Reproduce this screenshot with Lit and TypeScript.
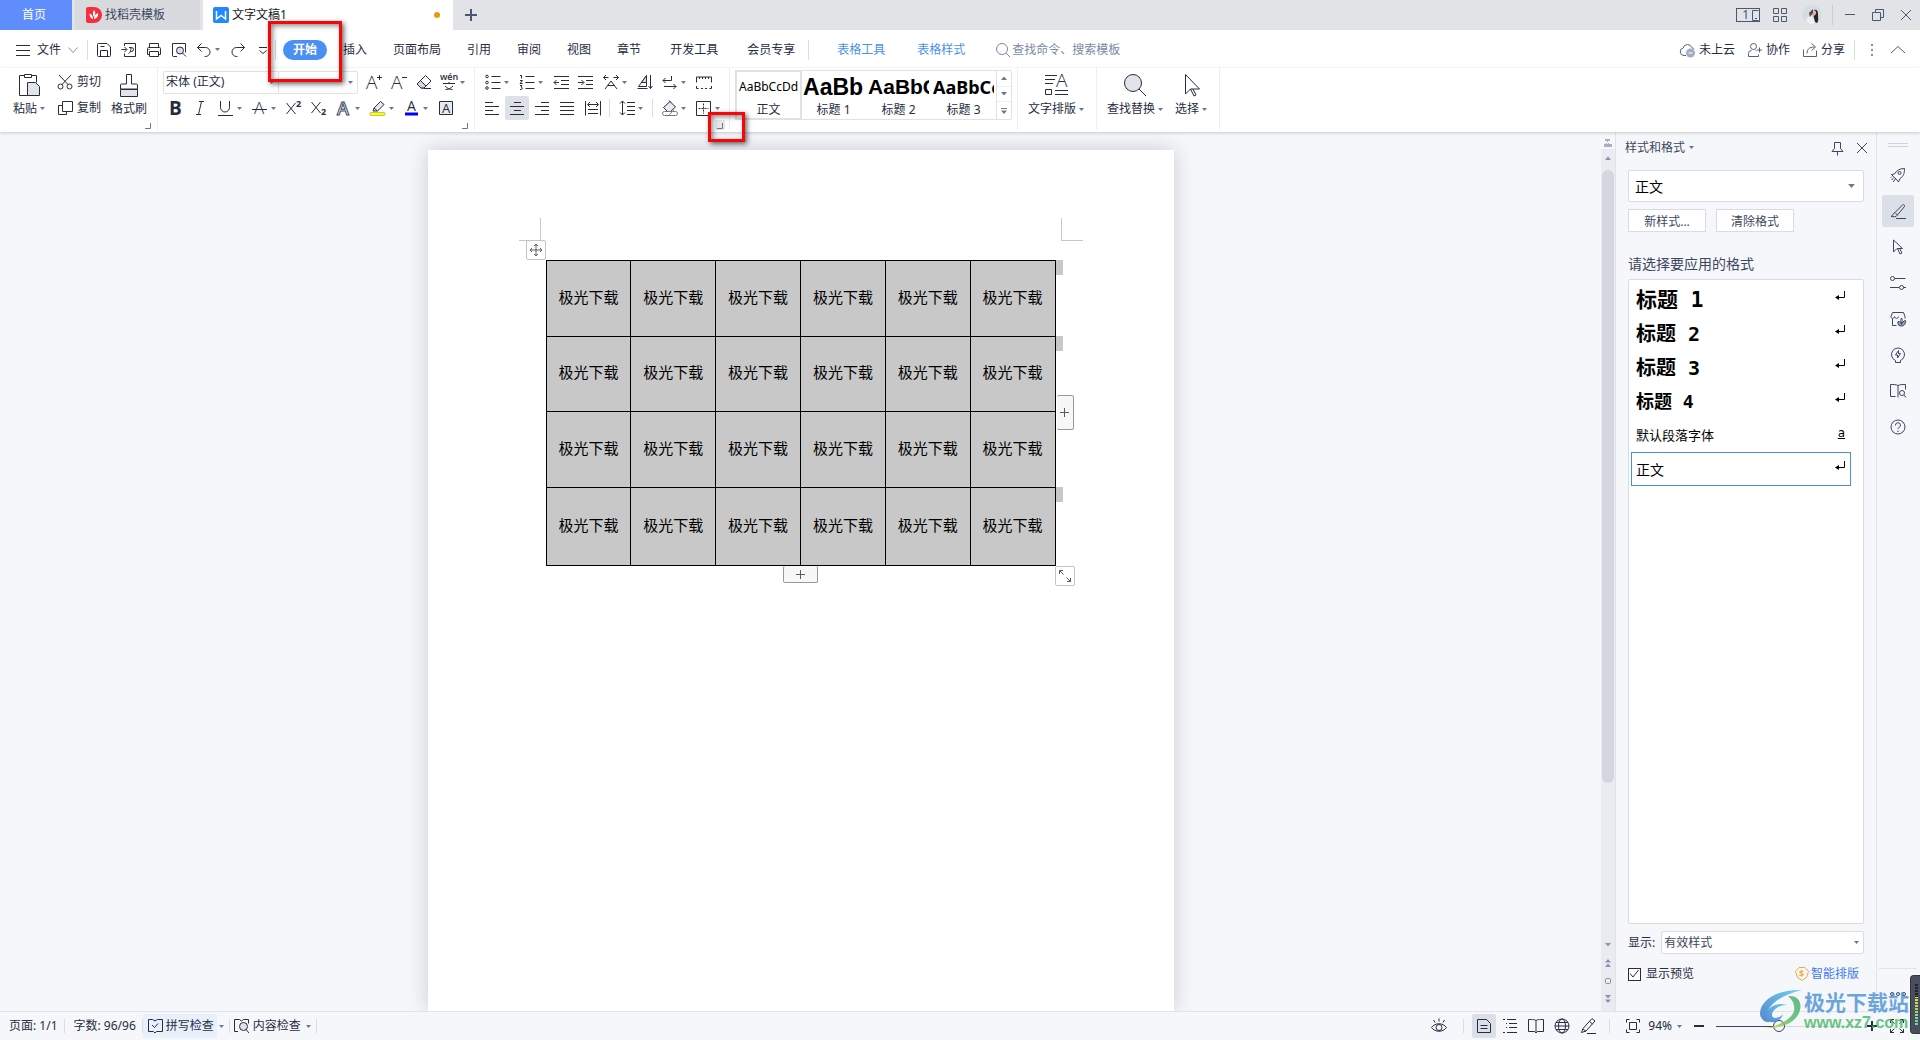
import { LitElement, html, svg, css, nothing, TemplateResult } from "lit";
import { customElement, state } from "lit/decorators.js";
import { classMap } from "lit/directives/class-map.js";

/* Line icons, drawn on a 16-unit grid unless a size is given. */
type Glyph = { w?: number; h?: number; d: TemplateResult };
const G: Record<string, Glyph> = {
  menu: { d: svg`<path d="M1 3.500h14M1 8.500h14M1 13.500h14"/>` },
  chevDown: { w: 12, h: 12, d: svg`<path d="M1.500 3.500l4.500 5 4.500-5" stroke="#8a90a0"/>` },
  chevUp: { d: svg`<path d="M1 11l7-6.500 7 6.500"/>` },
  save: { d: svg`<path d="M2.500 1.500h8.500l3.500 3.500v8.500a1 1 0 0 1-1 1h-11a1 1 0 0 1-1-1v-11a1 1 0 0 1 1-1zM4.500 14.500v-6h7v6M4.500 4.500h4"/>` },
  export: { d: svg`<path d="M3.500 4v-2.500h11v13h-11v-3M0.500 7.500h5M3.500 5l2.500 2.500-2.500 2.500M7.500 11.500c2-1 2.500-3 2.500-6M8 5.500h2.500a2 2 0 0 1 0 4h-1.500"/>` },
  print: { d: svg`<path d="M3.500 5.500v-4h9v4M3.500 12.500h-2v-6a1 1 0 0 1 1-1h11a1 1 0 0 1 1 1v6h-2M3.500 9.500h9v5h-9zM2.500 7.500h1"/>` },
  preview: { d: svg`<path d="M6 14.500h-3.500a1 1 0 0 1-1-1v-12h13v9"/><circle cx="9" cy="8.500" r="3.500" fill="#dcdfe6"/><path d="M11.500 11l3.500 3.500"/>` },
  undo: { d: svg`<path d="M5.500 1.500l-4 4 4 4M1.500 5.500h8a4.500 4.500 0 0 1 0 9h-1"/>` },
  redo: { d: svg`<path d="M10.500 1.500l4 4-4 4M14.500 5.500h-8a4.500 4.500 0 0 0 0 9h1"/>` },
  more: { d: svg`<path d="M4 5.500h8M4.500 8.500l3.500 3 3.500-3"/>` },
  search: { d: svg`<circle cx="7" cy="7" r="5.500"/><path d="M11 11l4 4"/>` },
  cloud: { w: 17, h: 16, d: svg`<path d="M7 13.500h-2a3.800 3.800 0 0 1-.8-7.500a4.500 4.500 0 0 1 8.600-.5a3.500 3.500 0 0 1 2.200 2"/><circle cx="11.500" cy="11" r="4.500" fill="#a3adc2" stroke="none"/><path d="M9.500 11h4" stroke="#fff"/>` },
  collab: { d: svg`<circle cx="6.500" cy="4.500" r="3"/><path d="M4.500 8.500a3 3 0 0 0-3 3v3h10v-2M8.500 8.500l1 .5M12.500 5.500v5M10 8h5"/>` },
  share: { d: svg`<path d="M1.500 7.500v7h13v-6M5 11.500c0-4 2-6.500 7.500-6.500M9.500 1.500l4 3.500-4 3.500"/>` },
  dots: { d: svg`<path d="M7 2h2v2h-2zM7 7h2v2h-2zM7 12h2v2h-2z" fill="currentColor" stroke="none" opacity=".7"/>` },
  plus: { d: svg`<path d="M8 2v12M2 8h12" stroke-width="2"/>` },
  phone: { w: 8, h: 12, d: svg`<path d="M7.500 1.500h-6v10h6M4 9.500h2"/>` },
  grid: { d: svg`<path d="M1.500 1.500h5v5h-5zM9.500 1.500h5v5h-5zM1.500 9.500h5v5h-5zM9.500 9.500h5v5h-5z"/>` },
  min: { d: svg`<path d="M3 7.500h10"/>` },
  restore: { d: svg`<path d="M2.500 5.500h8v8h-8zM5.500 5.500v-3h8v8h-3"/>` },
  close: { d: svg`<path d="M3 3l10 10M13 3l-10 10"/>` },
  avatar: { w: 20, h: 20, d: svg`<g stroke="none"><circle cx="10" cy="10" r="10" fill="#d3dde3"/><path d="M12 5c3-1 4 1 4 4 0 4 1 7-1 9l-2-1-2-8z" fill="#2b2226"/><path d="M10 6c2-2 5 0 4 3l-2 2-2-1z" fill="#e0b2a8"/><path d="M5 13l5-3 3 8-4 2-5-3z" fill="#eaf0f4"/><path d="M7 8l4-4 0 4-3 4z" fill="#5a494c"/></g>` },
  docer: { w: 16, h: 16, d: svg`<g stroke="none"><path d="M8 0a8 8 0 0 1 0 16H2a2 2 0 0 1-2-2V2a2 2 0 0 1 2-2z" fill="#f2303e"/><path d="M8 3c2 2 1.500 5-.2 7C6.500 8 6.500 5 8 3zM3.500 6.500c2 .5 3.500 2.500 3.500 5.500-2.500-.5-3.500-2.500-3.500-5.500zM12 6c.5 3-1 5.500-4 6 0-3 1.500-5 4-6z" fill="#fff"/></g>` },
  writer: { w: 16, h: 16, d: svg`<rect width="16" height="16" rx="2" fill="#2089fb" stroke="none"/><path d="M3.500 4v8l4.500-3.500 4.500 3.500v-8" stroke="#fff" stroke-width="1.500"/>` },

  paste: { w: 24, h: 24, d: svg`<path d="M7 2.500h-4.500v20h8M15 2.500h4.500v7M7.500 1.500h7v3h-7z"/><path d="M10.500 9.500h8l4 4v9h-12z" fill="#e1e4e9"/>` },
  cut: { d: svg`<path d="M2 1l9.500 10M14 1l-9.500 10"/><circle cx="3.500" cy="12.500" r="2.500"/><circle cx="12.500" cy="12.500" r="2.500"/>` },
  copy: { d: svg`<path d="M5.500 1.500h10v10h-10zM5.500 5.500h-4v9h8v-3"/>` },
  brush: { w: 24, h: 24, d: svg`<path d="M9.500 11v-9.500h5v9.500h5a1 1 0 0 1 1 1v4h-17v-4a1 1 0 0 1 1-1z"/><path d="M3.500 16.500h17v7h-17z" fill="#e1e4e9"/>` },
  aPlus: { d: svg`<text x="0" y="15" class="t19">A</text><path d="M11 3.500h5M13.500 1v5"/>` },
  aMinus: { d: svg`<text x="0" y="15" class="t19">A</text><path d="M11 3.500h5"/>` },
  eraser: { d: svg`<path d="M9.500 1.500l5.500 5.500-7 7h-3l-4-4z"/><path d="M1 10l3.500-3.500 5.500 5.500-2 2h-3z" fill="#d4d7de"/><path d="M8 14.500h7"/>` },
  pinyin: { d: svg`<text x="-1" y="6" class="t9">wén</text><path d="M2 9.500h12M8 8v2M4 12c2 2 4 3.500 7.500 3.500M12 12c-2 2-4 3.500-7.500 3.500"/>` },
  bold: { d: svg`<text x="1" y="15" class="bold">B</text>` },
  italic: { d: svg`<path d="M6 1.500h5M3 14.500h5M8.500 1.500l-3 13"/>` },
  underline: { d: svg`<path d="M2.500 1v6.500a4.500 4.500 0 0 0 9 0v-6.500M0 15.500h15"/>` },
  strike: { d: svg`<text x="2" y="14" class="t17">A</text><path d="M0 9.500h15"/>` },
  sup: { d: svg`<path d="M.5 3l9 11M9.500 3l-9 11"/><text x="10" y="7" class="t9b">2</text>` },
  sub: { d: svg`<path d="M.5 2l9 11M9.500 2l-9 11"/><text x="10" y="15" class="t9b">2</text>` },
  outline: { d: svg`<text x="1" y="15" class="out">A</text>` },
  highlight: { w: 16, d: svg`<path d="M4 8l6.500-6.500 3.500 3-6.500 6.500zM4 8l-1 3h4.500" fill="#e8eaee"/><rect x="0" y="12.500" width="15" height="3" rx="1" fill="#ffff00" stroke="#8a8a40" stroke-width=".5"/>` },
  fontColor: { d: svg`<text x="3" y="11" class="t14">A</text><path d="M1 14h13" stroke="#0000ff" stroke-width="3"/>` },
  boxA: { d: svg`<path d="M1.500 1.500h13v13h-13z" fill="#e8eaee"/><text x="4" y="13" class="t13">A</text>` },
  bullets: { d: svg`<circle cx="2" cy="2.500" r="1.300"/><circle cx="2" cy="8.500" r="1.300"/><circle cx="2" cy="14" r="1.300"/><path d="M6.500 2.500h9M6.500 8.500h9M6.500 14.500h9"/>` },
  numbers: { d: svg`<path d="M6.500 2.500h9M6.500 8.500h9M6.500 14.500h9M1 1.500h1.500v3M1 6.500h2.500l-2.500 3h2.500M1 11.500h2l-1 1.500 1.500 1-1 1.500h-1.500"/>` },
  outdent: { d: svg`<path d="M1 2.500h15M8 6.500h8M8 10.500h8M1 14.500h15M1 8.500h5M3.500 6l-2.500 2.500 2.500 2.500"/>` },
  indent: { d: svg`<path d="M0 2.500h15M8 6.500h7M8 10.500h7M0 14.500h15M0 8.500h5.500M3.500 6l2.500 2.500-2.500 2.500"/>` },
  charWidth: { d: svg`<path d="M.5 3.500h5M3 1l-2.500 2.500 2.500 2.500M15.500 3.500h-5M13 1l2.500 2.500-2.500 2.500M2 15l6-8 6 8M4.500 11.500h7"/>` },
  sort: { d: svg`<path d="M9.500 1.500v11h-8zM5.500 8.500h4"/><path d="M9.500 1.500v7h-5z" fill="#d9dce2"/><path d="M.5 14.500h10M13.500 1v13.500M11.500 12l2 2.500 2-2.500"/>` },
  marks: { d: svg`<path d="M9.500 2v4.500h-8.500M3.500 4l-2.500 2.500 2.500 2.500M2 12.500h12M11.500 10l2.500 2.500-2.500 2.500"/>` },
  ruler: { d: svg`<path d="M.5 8.500v-5.500h15v5.500M3.500 3v2M6.500 3v2M9.500 3v2M12.500 3v2M.5 12v2.500h2M15.500 12v2.500h-2M5 14.500h2M9 14.500h2"/>` },
  left: { d: svg`<path d="M0 2.500h8M0 6.500h14M0 10.500h8M0 14.500h14"/>` },
  center: { d: svg`<path d="M4 2.500h7M0 6.500h14M4 10.500h7M0 14.500h14"/>` },
  right: { d: svg`<path d="M6 2.500h8M0 6.500h14M6 10.500h8M0 14.500h14"/>` },
  justify: { d: svg`<path d="M0 2.500h14M0 6.500h14M0 10.500h14M0 14.500h14"/>` },
  distribute: { d: svg`<path d="M.5 1v14.500M15.500 1v14.500M3 4.500h10M5 2l-2.500 2.500 2.500 2.500M11 2l2.500 2.500-2.500 2.500M3 9.500h10M3 13.500h10"/>` },
  spacing: { d: svg`<path d="M3.500 1v14M1 3.500l2.500-2.500 2.500 2.500M1 12.500l2.500 2.500 2.500-2.500M8 2.500h8M8 6.500h8M8 10.500h8M8 14.500h8"/>` },
  shading: { d: svg`<path d="M8 1.500l5.500 5.500-5 4.500h-3l-4-4z" fill="#e8eaee"/><path d="M7 .5l2 2"/><rect x=".5" y="11.500" width="15" height="4" rx="2" fill="#fff" stroke="#777"/><path d="M7 15l5-5" stroke="#e66"/>` },
  borders: { d: svg`<path d="M.5 1.500h14v14h-14z"/><path d="M7.500 3.500v10M2.500 8.500h10" stroke-dasharray="2 1"/>` },
  typeset: { w: 24, h: 24, d: svg`<path d="M1 2.500h12M1 6.500h10M1 10.500h8M1.500 16.500h6v5h-6zM11 17.500h13M11 21.500h13"/><text x="12" y="14" class="t19">A</text>` },
  find: { w: 24, h: 24, d: svg`<circle cx="10" cy="10" r="8.500" fill="#e1e4e9"/><path d="M16 16l7 7"/>` },
  pointer: { w: 24, h: 24, d: svg`<path d="M6.500 1.500v19.500l5-5h9zM11.500 16l3.500 7 2-1-3-6"/>` },

  pin: { d: svg`<path d="M5.500 2.500h6v6l2.500 3h-11l2.500-3zM8.500 11.500v4"/>` },
  ret: { w: 10, h: 10, d: svg`<path d="M9.500 0v6.500h-7" stroke="#000"/><path d="M0 6.500l4-2.500v5z" fill="#000" stroke="none"/>` },
  coin: { d: svg`<path d="M5 1.500h6l3.500 4-2 6-4.500 3-4.500-3-2-6z" stroke="#efad3c"/><text x="5" y="11" class="coin">$</text>` },
  rocket: { d: svg`<path d="M14.500 1.500c-5 0-8 2-10 5.500l-3 .5 2 2 3.500 3.500 1.500 2 1.500-3.500c3.500-2 4.500-5 4.500-10z"/><circle cx="9.500" cy="6" r="1.500"/><path d="M4 10.500l-2.500 2.500M5.500 12l-2.500 3M1 10.500l1-1"/>` },
  pen: { d: svg`<path d="M5 9.500l8-8c1 0 2 1 1.500 2l-7 8.500c-1 2-4 2-6.500 1.500 2-.5 1.500-3 4-4zM5 9.500l2.500 2.500M6 15.500h10"/>` },
  cursor: { d: svg`<path d="M3.500 1v12l3.500-3.500h5.500zM7.500 9.500l2.500 5.500 2-1-2.500-4.500"/>` },
  sliders: { d: svg`<circle cx="2.500" cy="3.500" r="2"/><path d="M4.500 3.500h11M0 12.500h9M13.500 12.500h2.500"/><circle cx="11.500" cy="12.500" r="2"/>` },
  shop: { d: svg`<path d="M1 5.500l1.500-4h11l1.500 4M1 5.500c0 2.500 3 2.500 3.500 0 .5 2.500 3.500 2.500 4 0M2.500 7.500v7h4M15 5.500v2"/><path d="M9 14.500a4 4 0 0 1-1-4c2 0 3 1 3.500 3 .5-2 2-3.500 4-4 .5 3-1 5.500-4.500 5.500z" fill="#9aa2b3"/><path d="M11.500 7c-1 1.500-1 3 0 5 1-2 1-3.500 0-5z"/>` },
  bulb: { d: svg`<path d="M5.500 13.500a6.500 6.500 0 1 1 5 0v2h-5z"/><path d="M8.500 3.500l-3 4.500h2v3l3-4.500h-2z"/>` },
  book: { d: svg`<path d="M8 14.500v-12c-2-1-4-1-7.500-1v12h5M8 2.500c2-1 4-1 7.500-1v5"/><circle cx="12" cy="10" r="2.500"/><path d="M14 12l2 2.500"/>` },
  help: { d: svg`<circle cx="8" cy="8" r="7"/><path d="M5.500 6.500a2.500 2.500 0 1 1 3.500 2c-1 .5-1 1-1 1.500M8 11.500v1.500"/>` },
  three: { d: svg`<circle cx="2" cy="8" r="1.500"/><circle cx="8" cy="8" r="1.500"/><circle cx="14" cy="8" r="1.500"/>` },

  spell: { d: svg`<path d="M5.500 1.500h-4v12h5l1.500 1.500 1.500-1.500h6v-12h-5l-2.500 1.500z"/><path d="M5 7l2.500 2.500 3.500-4"/>` },
  inspect: { d: svg`<path d="M4 13.500h-3.500v-12h5l2 1.500 2-1.500h5v4"/><circle cx="9.500" cy="8.500" r="4" fill="#dfe3ea"/><path d="M12 11.500l3 3.500"/>` },
  eye: { d: svg`<path d="M.5 9.500c3.500-5 11.500-5 15 0-3.500 5-11.500 5-15 0zM8 .5v3M2.500 2l1.500 2.500M13.500 2l-1.500 2.500"/><circle cx="8" cy="9.500" r="3"/>` },
  docView: { d: svg`<path d="M1.500 1.500h9l4 4v9h-13zM4.500 7.500h7M4.500 10.500h7"/>` },
  outlineView: { d: svg`<path d="M1 1.500h2M5 1.500h9M4 5.500h1M7 5.500h8M4 9.500h1M7 9.500h8M1 14.500h2M5 14.500h10"/>` },
  readView: { d: svg`<path d="M8 14.500v-12c-1.500-1-3-1-7.500-1v12h6l1.500 1.500 1.500-1.500h6v-12c-4.500 0-6 0-7.500 1"/>` },
  web: { d: svg`<circle cx="8" cy="8" r="7"/><ellipse cx="8" cy="8" rx="3.500" ry="7"/><path d="M1 8h14M2 4.500h12M2 11.500h12"/>` },
  write: { d: svg`<path d="M12 .5l3 2.500-9 10-4.500 1.500 1.500-4zM9.500 3.500l3 2.500M3 11l3 2.500M7 15.500h9"/>` },
  fit: { d: svg`<path d="M1.500 4.500v-3h3M11.500 1.500h3v3M14.500 11.500v3h-3M4.500 14.500h-3v-3M4.500 4.500h7v7h-7z"/>` },
  expand: { d: svg`<path d="M1.500 5v-3.500h3.500M11 1.500h3.500v3.500M14.500 11v3.500h-3.500M5 14.500h-3.500v-3.500M1.500 1.500l4 4M14.500 1.500l-4 4M14.500 14.500l-4-4M1.500 14.500l4-4"/>` },
  minus2: { d: svg`<path d="M3 8h10" stroke-width="2"/>` },
  plus2: { d: svg`<path d="M3 8h10M8 3v10" stroke-width="2"/>` },

  move: { w: 14, h: 14, d: svg`<path d="M7 1v12M1 7h12M5 3l2-2 2 2M5 11l2 2 2-2M3 5l-2 2 2 2M11 5l2 2-2 2"/>` },
  thinPlus: { w: 9, h: 9, d: svg`<path d="M4.500 0v9M0 4.500h9"/>` },
  resize: { w: 14, h: 14, d: svg`<path d="M1.500 5v-3.500h3.500M1.500 1.500l4 4M12.500 9v3.500h-3.500M12.500 12.500l-4-4"/>` },
  launch: { w: 6, h: 6, d: svg`<path d="M5.500 0v5.500h-5.500"/>` },
  tick: { w: 12, h: 12, d: svg`<path d="M2 5.500l3 3.500 5.500-7"/>` },
  sbTop: { w: 8, h: 8, d: svg`<path d="M1 0h5v2h-2v1h-1v-1h-2zM0 5h2v-1h1v1h1v-1h1v1h3v3h-8z" fill="currentColor" stroke="none"/>` },
  sbUp: { w: 6, h: 4, d: svg`<path d="M0 4l3-3.500 3 3.500z" fill="currentColor" stroke="none"/>` },
  sbDown: { w: 6, h: 4, d: svg`<path d="M0 0h6l-3 3.500z" fill="currentColor" stroke="none"/>` },
  sbUp2: { w: 6, h: 8, d: svg`<path d="M0 3.500l3-3.500 3 3.500zM0 8l3-3.500 3 3.500z" fill="currentColor" stroke="none"/>` },
  sbDown2: { w: 6, h: 8, d: svg`<path d="M0 0h6l-3 3.500zM0 4.500h6l-3 3.500z" fill="currentColor" stroke="none"/>` },
  sbBox: { w: 6, h: 6, d: svg`<rect x=".5" y=".5" width="5" height="5" rx="1"/>` },
  sbMore: { w: 6, h: 6, d: svg`<path d="M0 .5h6"/><path d="M0 2.500h6l-3 3.500z" fill="currentColor" stroke="none"/>` },
  brand: { w: 44, h: 42, d: svg`<defs><linearGradient id="wb" x1="0" y1="1" x2="1" y2="0"><stop offset="0" stop-color="#2f6fc4"/><stop offset="1" stop-color="#4cc4f2"/></linearGradient><linearGradient id="wg" x1="0" y1="1" x2="1" y2="0"><stop offset="0" stop-color="#e6d83c"/><stop offset=".5" stop-color="#4fb96a"/><stop offset="1" stop-color="#3cae6c"/></linearGradient></defs><g stroke="none"><path d="M43 1C22 0 2 9 1 24c0 6 5 10 10 9-8-7-1-24 32-32z" fill="url(#wb)"/><path d="M28 16c-12-4-23 5-21 13 3 7 15 5 17-4-4 5-11 5-11 1 0-5 7-10 15-10z" fill="url(#wb)"/><path d="M29 7c10-1 14 6 12 14C38 33 24 40 5 39c14-2 27-8 30-17 1-6-1-11-6-15z" fill="url(#wg)"/></g>` },
};

const icon = (name: string) => {
  const g = G[name], w = g.w ?? 16, h = g.h ?? 16;
  return html`<svg class="ic" width=${w} height=${h} viewBox="0 0 ${w} ${h}" aria-hidden="true">${g.d}</svg>`;
};
const caret = html`<svg class="caret" width="5" height="3" viewBox="0 0 5 3" aria-hidden="true"><path d="M0 0h5l-2.500 3z"/></svg>`;

/* One toolbar button; "v" marks a drop-down, "|" a divider. */
type Tool = [name: string, label: string, kind?: "v" | "on"] | "|";

const MENUS = ["插入", "页面布局", "引用", "审阅", "视图", "章节"];
const SIDE: [string, string][] = [
  ["rocket", "快捷"], ["pen", "样式和格式"], ["cursor", "选择"], ["sliders", "属性"],
  ["shop", "资源"], ["bulb", "灵感"], ["book", "查阅"], ["help", "帮助"],
];
const STYLES: [string, string, string][] = [
  ["标题 1", "h1", "ret"], ["标题 2", "h2", "ret"], ["标题 3", "h2", "ret"],
  ["标题 4", "h4", "ret"], ["默认段落字体", "def", "a"], ["正文", "body", "ret"],
];

@customElement("app-root")
export class AppRoot extends LitElement {
  @state() private current = "正文";
  @state() private zoom = 94;

  static styles = css`
    :host { display: block; }
    * { box-sizing: border-box; }
    .app {
      position: relative; min-height: 100vh; display: flex; flex-direction: column; overflow: hidden;
      font: 12px/16px "Noto Sans", "Noto Sans CJK SC", sans-serif; color: #262d3f; background: #f5f7fa;
    }
    button, select, input { font: inherit; color: inherit; margin: 0; }
    button { border: 0; padding: 0; background: none; display: flex; align-items: center; white-space: nowrap; flex: none; }
    select { appearance: none; border: 0; background: none; outline: 0; border-radius: 0; min-width: 0; }
    a { color: inherit; text-decoration: none; }
    .ic { flex: none; display: block; fill: none; stroke: currentColor; stroke-width: 1; overflow: visible; }
    .ic text { stroke: none; fill: currentColor; font-family: "Open Sans", sans-serif; }
    .ic .t19 { font-size: 19px; font-weight: 300; }
    .ic .t17 { font-size: 17px; font-weight: 300; }
    .ic .t14 { font-size: 14px; }
    .ic .t13 { font-size: 13px; }
    .ic .t9 { font-size: 9px; font-weight: 600; }
    .ic .t9b { font-size: 9px; font-weight: 700; }
    .ic .bold { font-size: 19px; font-weight: 700; }
    .ic .out { font-size: 18px; font-weight: 600; fill: #fff; stroke: #3a4560; }
    .ic .coin { font-size: 9px; font-weight: 700; fill: #efad3c; }
    .caret { flex: none; fill: #6b7690; }
    .grow { flex: 1; }
    .bar { width: 1px; height: 20px; background: #dadde3; flex: none; }

    .title { display: flex; align-items: center; height: 30px; background: #e1e3e7; color: #4a5672; }
    .tabs { display: flex; gap: 3px; height: 30px; }
    .tab { height: 30px; padding: 0 11px; gap: 3px; color: #3d4761; background: #d8dade; width: 125px; }
    .tab.home { width: 72px; justify-content: center; padding: 0 4px 0 0; background: #5f8dfb; color: #fff; }
    .tab.doc { width: 250px; padding: 0 13px 0 10px; background: #fff; color: #14181f; }
    .dirty { width: 6px; height: 6px; border-radius: 50%; background: #e69a0b; }
    .add { width: 36px; height: 30px; justify-content: center; }
    .win { width: 28px; height: 30px; justify-content: center; }
    .win.app-btn { width: 32px; }
    .count { display: flex; align-items: center; justify-content: flex-end; gap: 2px; width: 24px; height: 14px; line-height: 12px; border: 1px solid currentColor; }
    .title .bar { margin: 0 3px 0 4px; background: #c9ccd3; }

    .menu { display: flex; align-items: center; height: 38px; padding-top: 1px; background: #fff; }
    .file { height: 28px; padding: 0 8px 0 15px; gap: 6px; }
    .quick { display: flex; padding-left: 3px; }
    .cell { width: 25px; height: 24px; padding-left: 5px; }
    .cell.v { width: 34px; gap: 3px; }
    .cell.on { width: 24px; margin-right: 1px; background: #dde1e7; border-radius: 2px; }
    .pill { height: 20px; padding: 0 10px; margin: 0 3px 0 7px; border-radius: 10px; background: #4a90f2; color: #fff; font-weight: 700; }
    .m { height: 28px; padding: 0 13px; }
    .m.wide { padding: 0 13px 0 16px; }
    .ctx { display: flex; gap: 3px; padding-left: 12px; color: #4a8ff0; }
    .seek { display: flex; align-items: center; gap: 1px; width: 200px; margin-left: 17px; color: #7b88a6; }
    .seek input { border: 0; outline: 0; padding: 0; background: none; width: 160px; }
    .seek input::placeholder { color: #7b88a6; opacity: 1; }
    .cloud { display: flex; gap: 12px; padding-right: 9px; }
    .cloud button { gap: 3px; }
    .cloud .ic, .mute { color: #55607a; }
    .end { display: flex; padding: 0 9px 0 4px; }
    .end button { width: 26px; height: 24px; justify-content: center; }

    .ribbon { position: relative; display: flex; height: 64px; padding-bottom: 2px; background: #fff; box-shadow: 0 1px 3px rgba(60, 64, 72, .25); z-index: 1; }
    .group { display: flex; flex-direction: column; padding: 2px 4px 0 5px; border-right: 1px solid #eceef1; }
    .row { display: flex; align-items: center; height: 24px; margin-bottom: 2px; }
    .row + .row { margin-bottom: 0; }
    .launch { align-self: flex-end; width: 10px; height: 10px; justify-content: center; padding-top: 1px; color: #6b7690; }
    .launch.hot { background: #e6e7ea; }
    .clip { display: flex; gap: 8px; padding: 0 6px 0 4px; height: 50px; }
    .big { display: flex; flex-direction: column; align-items: center; padding-top: 3px; }
    .big span { display: flex; align-items: center; gap: 3px; height: 24px; }
    .pair { display: flex; flex-direction: column; gap: 2px; }
    .pair button { height: 24px; gap: 4px; }
    .clip .pair { margin-right: 2px; }
    .paste { width: 40px; }
    .fonts { display: flex; height: 23px; width: 195px; margin-right: 3px; border: 1px solid #dfe1e6; border-radius: 2px; }
    .drop { display: grid; grid-template-columns: 1fr auto; align-items: center; flex: 1; min-width: 0; }
    .drop select { grid-area: 1 / 1 / 2 / 3; width: 100%; height: 100%; padding: 0 14px 0 2px; }
    .drop .caret { grid-area: 1 / 2; margin-right: 4px; pointer-events: none; }
    .drop.size { flex: none; width: 79px; border-left: 1px solid #dfe1e6; }
    .row .bar { height: 18px; margin: 0 4px; }
    .gallery { display: flex; width: 277px; height: 50px; border: 1px solid #dfe1e6; border-radius: 2px; }
    .gap5 { padding: 2px 5px 0 5px; }
    .st { flex-direction: column; width: 65px; padding: 0 2px; height: 48px; overflow: hidden; color: #262d3f; }
    .st.sel { outline: 2px solid #dfe1e6; outline-offset: -1px; }
    .st b, .st i { display: flex; align-items: center; width: 100%; height: 32px; overflow: hidden; color: #000; font-style: normal; }
    .st i { font-size: 12px; justify-content: center; }
    .s1 { font: 700 23px/32px "Liberation Sans", sans-serif; }
    .s2 { font: 700 21px/32px "Liberation Sans", sans-serif; }
    .s3 { font: 700 18px/32px "Noto Sans", sans-serif; }
    .st span { height: 16px; line-height: 14px; }
    .steps { display: grid; flex: 1; border-left: 1px solid #dfe1e6; }
    .steps button { justify-content: center; color: #6b7690; }
    .steps button + button { border-top: 1px solid #eceef1; }
    .tools { flex-direction: row; gap: 12px; padding: 2px 12px 0 10px; }

    .main { flex: 1; display: flex; }
    .desk { flex: 1; display: flex; justify-content: center; padding-top: 18px; overflow: hidden; }
    .page { position: relative; width: 746px; padding: 110px 118px; background: #fff; box-shadow: 0 0 20px rgba(30, 34, 44, .2); }
    .wrap { position: relative; }
    table { width: 510px; border-collapse: collapse; table-layout: fixed; background: #c8c8c8; }
    td { height: 76px; padding: 0 0 4px; border: 1px solid #000; text-align: center; font: 15px/20px "Noto Sans CJK SC", sans-serif; color: #000; }
    tr:nth-child(2) td { height: 75px; }
    tr:last-child td { height: 78px; }
    .crop { position: absolute; top: 68px; width: 22px; height: 23px; border-bottom: 1px solid #c8c8c8; }
    .crop.l { left: 91px; border-right: 1px solid #c8c8c8; }
    .crop.r { right: 91px; border-left: 1px solid #c8c8c8; }
    .grip { position: absolute; justify-content: center; background: #fff; border: 1px solid #c4c4c4; border-radius: 2px; color: #5c5c5c; }
    .grip.mv { left: -20px; top: -20px; width: 20px; height: 20px; }
    .grip.rs { right: -19px; bottom: -20px; width: 20px; height: 20px; }
    .grip.col { right: -18px; top: 135px; width: 17px; height: 35px; border-color: #999; border-left: 0; background: #f7f7f7; }
    .grip.ln { left: 237px; bottom: -17px; width: 35px; height: 17px; border-color: #999; border-top: 0; background: #f7f7f7; }
    .eor { position: absolute; left: 510px; width: 7px; height: 15px; background: #c8c8c8; }
    .eor.e0 { top: 0; } .eor.e1 { top: 76px; } .eor.e3 { top: 227px; }

    .scroll { width: 14px; display: flex; flex-direction: column; align-items: center; padding-bottom: 3px; color: #8a93ab; background: #e9ebf0; }
    .scroll .top { width: 14px; height: 17px; padding-top: 4px; justify-content: center; background: #f5f7fa; color: #a9b0c2; }
    .scroll button { width: 14px; height: 18px; justify-content: center; }
    .track { flex: 1; width: 12px; margin-top: 3px; }
    .thumb { height: 80%; border-radius: 6px; background: #d4d7df; }

    .pane { width: 261px; display: flex; flex-direction: column; padding: 0 12px 0 12px; border-left: 1px solid #e1e3e8; color: #3d4761; }
    .head { display: flex; align-items: center; height: 30px; padding-top: 1px; margin: 0 -6px 8px -3px; gap: 9px; }
    .head h2 { margin: 0; font: inherit; display: flex; align-items: center; gap: 4px; flex: 1; }
    .box { background: #fff; border: 1px solid #d9dce2; border-radius: 2px; }
    .cur { flex: none; height: 32px; font-size: 14px; color: #000; }
    .cur select { padding: 2px 14px 0 6px; }
    .cur .caret { margin-right: 8px; width: 7px; height: 4px; }
    .acts { display: flex; gap: 10px; margin-top: 7px; }
    .acts button { width: 78px; height: 23px; padding-top: 2px; justify-content: center; border-radius: 0; }
    .cap { margin: 22px 0 5px; font-size: 14px; line-height: 20px; }
    .list { flex: 1; padding: 2px; }
    .item { width: 220px; height: 34px; padding: 2px 5px 0 4px; justify-content: space-between; border: 1px solid transparent; color: #000; font-family: "DejaVu Sans Mono", "Noto Sans CJK SC", monospace; }
    .item.sel { border-color: #4a90e2; }
    .item.h1 { font-size: 21px; font-weight: 700; }
    .item.h2 { font-size: 20px; font-weight: 700; }
    .item.h4 { font-size: 18px; font-weight: 700; }
    .item.def { font-size: 13px; }
    .item.body { font-size: 14px; }
    .item u { font-size: 12px; line-height: 12px; margin-bottom: 6px; }
    .item .ic { margin-bottom: 8px; }
    .show { display: flex; align-items: center; gap: 6px; margin-top: 7px; height: 23px; }
    .show label { color: #262d3f; }
    .show .box { height: 23px; }
    .prev { display: flex; align-items: center; justify-content: space-between; height: 16px; margin: 12px 5px 29px 0; }
    .prev label { display: flex; align-items: center; gap: 5px; color: #262d3f; }
    .chk { display: grid; }
    .chk input { grid-area: 1 / 1; appearance: none; width: 13px; height: 13px; border: 1px solid #262d3f; background: #fff; }
    .chk .ic { grid-area: 1 / 1; pointer-events: none; }
    .smart { display: flex; align-items: center; gap: 1px; color: #3f78f0; }

    .side { width: 44px; display: flex; flex-direction: column; align-items: center; padding: 11px 1px 0 0; border-left: 1px solid #e1e3e8; color: #3b4560; }
    .handle { width: 20px; height: 4px; border: 1px solid #cfd2d8; border-width: 1px 0; margin-bottom: 12px; }
    .side button { width: 32px; height: 32px; margin-bottom: 4px; justify-content: center; border-radius: 2px; }
    .side button.sel { background: #dbe0e8; }
    .rest { display: flex; justify-content: center; width: 38px; height: 43px; padding-top: 17px; margin-top: auto; border-top: 1px solid #e1e3e8; }

    .status { display: flex; align-items: center; height: 29px; border-top: 1px solid #e1e3e8; }
    .status .bar { height: 14px; }
    .status > span { padding: 0 6px 0 9px; }
    .chkbtn { height: 24px; gap: 3px; padding: 0 3px 0 4px; }
    .chkbtn.hot { background: #e8f0fb; }
    .status .caret { margin: 0 5px 0 2px; }
    .views { display: flex; padding: 0 9px 0 8px; gap: 2px; }
    .views button { width: 24px; height: 24px; justify-content: center; border-radius: 2px; }
    .views button.sel { background: #dbe0e8; }
    .status .eye { padding: 0 16px 0 13px; }
    .zoom { display: flex; align-items: center; padding: 0 15px; }
    .zoom .pct { gap: 5px; margin-left: 7px; }
    .zoom .pct .caret { margin: 0 9px 0 0; }
    .zoom input { appearance: none; width: 140px; height: 14px; margin: 0 8px 0 9px; background: linear-gradient(90deg, #3b4560 45%, #d4d7df 45%) center / 100% 1px no-repeat; }
    .zoom input::-webkit-slider-thumb { appearance: none; width: 12px; height: 12px; border: 1px solid #3b4560; border-radius: 50%; background: #f5f7fa; }
    .zoom .full { margin-left: 9px; }

    .mark { position: absolute; border: 3px solid #fa0505; box-shadow: 2px 2px 5px rgba(0, 0, 0, .6), inset 2px 2px 5px rgba(0, 0, 0, .45); pointer-events: none; z-index: 3; }
    .mark.a { left: 268px; top: 21px; width: 74px; height: 61px; }
    .mark.b { left: 708px; top: 112px; width: 37px; height: 30px; }
    .water { position: absolute; right: 11px; bottom: 7px; display: flex; gap: 1px; opacity: .8; pointer-events: none; z-index: 3; }
    .water p { margin: 0; font: 700 21px/24px "Noto Sans CJK SC", sans-serif; color: #4a90d6; }
    .water p + p { font: 700 16px/20px "Liberation Sans", sans-serif; color: #46b768; }
    .meter { position: absolute; right: 0; bottom: 6px; width: 10px; height: 59px; padding: 7px 2px 7px 4px; border-radius: 4px 0 0 4px; background: #4a4e5c; border: 1px solid #33363f; border-right: 0; z-index: 3; }
    .meter i { display: block; height: 100%; background: repeating-linear-gradient(#4a4e5c 0 1px, transparent 1px 3px), linear-gradient(#22252c 33%, #e8dc4a 33%, #a8dc5a 60%, #4fe0b8); }
  `;

  private tools(list: Tool[]) {
    return list.map((t) =>
      t === "|"
        ? html`<i class="bar"></i>`
        : html`<button class=${classMap({ cell: true, v: t[2] === "v", on: t[2] === "on" })} aria-label=${t[1]}>
            ${icon(t[0])}${t[2] === "v" ? caret : nothing}
          </button>`
    );
  }

  private titleBar() {
    return html`<header class="title">
      <nav class="tabs">
        <button class="tab home">首页</button>
        <button class="tab">${icon("docer")}找稻壳模板</button>
        <button class="tab doc">${icon("writer")}文字文稿1<i class="grow"></i><i class="dirty"></i></button>
      </nav>
      <button class="add" aria-label="新建">${icon("plus")}</button>
      <i class="grow"></i>
      <button class="win app-btn" aria-label="多窗口"><span class="count">1${icon("phone")}</span></button>
      <button class="win app-btn" aria-label="应用">${icon("grid")}</button>
      <button class="win app-btn" aria-label="账号">${icon("avatar")}</button>
      <i class="bar"></i>
      <button class="win" aria-label="最小化">${icon("min")}</button>
      <button class="win" aria-label="还原">${icon("restore")}</button>
      <button class="win" aria-label="关闭">${icon("close")}</button>
    </header>`;
  }

  private menuBar() {
    return html`<nav class="menu">
      <button class="file">${icon("menu")}文件${icon("chevDown")}</button>
      <i class="bar"></i>
      <div class="quick">
        ${this.tools([["save", "保存"], ["export", "输出为PDF"], ["print", "打印"], ["preview", "打印预览"], ["undo", "撤销", "v"], ["redo", "恢复"], ["more", "自定义"]])}
      </div>
      <i class="bar"></i>
      <button class="pill">开始</button>
      ${MENUS.map((m) => html`<button class="m">${m}</button>`)}
      <button class="m wide">开发工具</button>
      <button class="m wide">会员专享</button>
      <i class="bar"></i>
      <div class="ctx"><button class="m wide">表格工具</button><button class="m wide">表格样式</button></div>
      <label class="seek">${icon("search")}<input aria-label="查找命令" placeholder="查找命令、搜索模板" /></label>
      <i class="grow"></i>
      <div class="cloud">
        <button>${icon("cloud")}未上云</button>
        <button>${icon("collab")}协作</button>
        <button>${icon("share")}分享</button>
      </div>
      <i class="bar"></i>
      <div class="end mute">
        <button aria-label="更多">${icon("dots")}</button>
        <button aria-label="收起功能区">${icon("chevUp")}</button>
      </div>
    </nav>`;
  }

  private ribbon() {
    return html`<section class="ribbon">
      <div class="group">
        <div class="clip">
          <button class="big paste">${icon("paste")}<span>粘贴${caret}</span></button>
          <div class="pair">
            <button>${icon("cut")}剪切</button>
            <button>${icon("copy")}复制</button>
          </div>
          <button class="big">${icon("brush")}<span>格式刷</span></button>
        </div>
        <button class="launch" aria-label="剪贴板">${icon("launch")}</button>
      </div>
      <div class="group">
        <div class="row">
          <div class="fonts">
            <span class="drop"><select aria-label="字体"><option>宋体 (正文)</option></select>${caret}</span>
            <span class="drop size"><select aria-label="字号"><option></option></select>${caret}</span>
          </div>
          ${this.tools([["aPlus", "增大字号"], ["aMinus", "减小字号"], ["eraser", "清除格式"], ["pinyin", "拼音指南", "v"]])}
        </div>
        <div class="row">
          ${this.tools([["bold", "加粗"], ["italic", "倾斜"], ["underline", "下划线", "v"], ["strike", "删除线", "v"], ["sup", "上标"], ["sub", "下标"], ["outline", "文字效果", "v"], ["highlight", "突出显示", "v"], ["fontColor", "字体颜色", "v"], ["boxA", "字符底纹"]])}
        </div>
        <button class="launch" aria-label="字体设置">${icon("launch")}</button>
      </div>
      <div class="group">
        <div class="row">
          ${this.tools([["bullets", "项目符号", "v"], ["numbers", "编号", "v"], ["outdent", "减少缩进量"], ["indent", "增加缩进量"], ["charWidth", "中文版式", "v"], ["sort", "排序"], ["marks", "显示标记", "v"], ["ruler", "制表位"]])}
        </div>
        <div class="row">
          ${this.tools([["left", "左对齐"], ["center", "居中对齐", "on"], ["right", "右对齐"], ["justify", "两端对齐"], ["distribute", "分散对齐"], "|", ["spacing", "行距", "v"], "|", ["shading", "底纹颜色", "v"], ["borders", "边框", "v"]])}
        </div>
        <button class="launch hot" aria-label="段落设置">${icon("launch")}</button>
      </div>
      <div class="group gap5">
        <div class="gallery">
          <button class="st sel"><i>AaBbCcDd</i><span>正文</span></button>
          <button class="st"><b class="s1">AaBb</b><span>标题 1</span></button>
          <button class="st"><b class="s2">AaBbC</b><span>标题 2</span></button>
          <button class="st"><b class="s3">AaBbCc</b><span>标题 3</span></button>
          <div class="steps">
            <button aria-label="上一行">${icon("sbUp")}</button>
            <button aria-label="下一行">${icon("sbDown")}</button>
            <button aria-label="全部样式">${icon("sbMore")}</button>
          </div>
        </div>
      </div>
      <div class="group tools">
        <button class="big">${icon("typeset")}<span>文字排版${caret}</span></button>
      </div>
      <div class="group tools">
        <button class="big">${icon("find")}<span>查找替换${caret}</span></button>
        <button class="big">${icon("pointer")}<span>选择${caret}</span></button>
      </div>
    </section>`;
  }

  private document() {
    const row = html`<tr>${Array.from({ length: 6 }, () => html`<td>极光下载</td>`)}</tr>`;
    return html`<main class="desk">
      <article class="page">
        <i class="crop l"></i><i class="crop r"></i>
        <div class="wrap">
          <table><tbody>${[0, 1, 2, 3].map(() => row)}</tbody></table>
          <i class="eor e0"></i><i class="eor e1"></i><i class="eor e3"></i>
          <button class="grip mv" aria-label="移动表格">${icon("move")}</button>
          <button class="grip col" aria-label="添加列">${icon("thinPlus")}</button>
          <button class="grip ln" aria-label="添加行">${icon("thinPlus")}</button>
          <button class="grip rs" aria-label="调整大小">${icon("resize")}</button>
        </div>
      </article>
    </main>`;
  }

  private scrollbar() {
    return html`<div class="scroll">
      <button class="top" aria-label="标尺">${icon("sbTop")}</button>
      <button aria-label="向上滚动">${icon("sbUp")}</button>
      <div class="track"><div class="thumb"></div></div>
      <button aria-label="向下滚动">${icon("sbDown")}</button>
      <button aria-label="上一页">${icon("sbUp2")}</button>
      <button aria-label="选择浏览对象">${icon("sbBox")}</button>
      <button aria-label="下一页">${icon("sbDown2")}</button>
    </div>`;
  }

  private pane() {
    return html`<aside class="pane">
      <div class="head">
        <h2>样式和格式${caret}</h2>
        <button aria-label="固定">${icon("pin")}</button>
        <button aria-label="关闭窗格">${icon("close")}</button>
      </div>
      <div class="box drop cur"><select aria-label="当前样式"><option>${this.current}</option></select>${caret}</div>
      <div class="acts"><button class="box">新样式...</button><button class="box">清除格式</button></div>
      <div class="cap">请选择要应用的格式</div>
      <div class="box list">
        ${STYLES.map(([name, cls, mark]) => html`<button
          class="item ${cls} ${this.current === name ? "sel" : ""}" @click=${() => (this.current = name)}>
          <span>${name}</span>${mark === "a" ? html`<u>a</u>` : icon("ret")}</button>`)}
      </div>
      <div class="show">
        <label for="scope">显示:</label>
        <div class="box drop"><select id="scope"><option>有效样式</option></select>${caret}</div>
      </div>
      <div class="prev">
        <label><span class="chk"><input type="checkbox" checked />${icon("tick")}</span>显示预览</label>
        <a class="smart" href="#">${icon("coin")}智能排版</a>
      </div>
    </aside>`;
  }

  private sidebar() {
    return html`<nav class="side">
      <i class="handle"></i>
      ${SIDE.map(([g, l]) => html`<button class=${g === "pen" ? "sel" : ""} aria-label=${l}>${icon(g)}</button>`)}
      <div class="rest">${icon("three")}</div>
    </nav>`;
  }

  private statusBar() {
    return html`<footer class="status">
      <span>页面: 1/1</span><i class="bar"></i>
      <span>字数: 96/96</span><i class="bar"></i>
      <button class="chkbtn hot">${icon("spell")}拼写检查</button>${caret}<i class="bar"></i>
      <button class="chkbtn">${icon("inspect")}内容检查</button>${caret}<i class="bar"></i>
      <i class="grow"></i>
      <button class="eye" aria-label="护眼模式">${icon("eye")}</button><i class="bar"></i>
      <div class="views">
        ${[["docView", "页面视图"], ["outlineView", "大纲"], ["readView", "阅读版式"], ["web", "Web版式"], ["write", "写作模式"]].map(
          ([g, l]) => html`<button class=${g === "docView" ? "sel" : ""} aria-label=${l}>${icon(g)}</button>`)}
      </div>
      <i class="bar"></i>
      <div class="zoom">
        <button aria-label="适合页面">${icon("fit")}</button>
        <button class="pct">${this.zoom}%${caret}</button>
        <button aria-label="缩小">${icon("minus2")}</button>
        <input type="range" aria-label="缩放" min="10" max="198" .value=${String(this.zoom)}
          @input=${(e: Event) => (this.zoom = Number((e.target as HTMLInputElement).value))} />
        <button aria-label="放大">${icon("plus2")}</button>
        <button class="full" aria-label="全屏">${icon("expand")}</button>
      </div>
    </footer>`;
  }

  render() {
    return html`<div class="app">
      ${this.titleBar()}${this.menuBar()}${this.ribbon()}
      <div class="main">${this.document()}${this.scrollbar()}${this.pane()}${this.sidebar()}</div>
      ${this.statusBar()}
      <i class="mark a"></i><i class="mark b"></i>
      <div class="water">${icon("brand")}<div><p>极光下载站</p><p>www.xz7.com</p></div></div>
      <div class="meter"><i></i></div>
    </div>`;
  }
}
